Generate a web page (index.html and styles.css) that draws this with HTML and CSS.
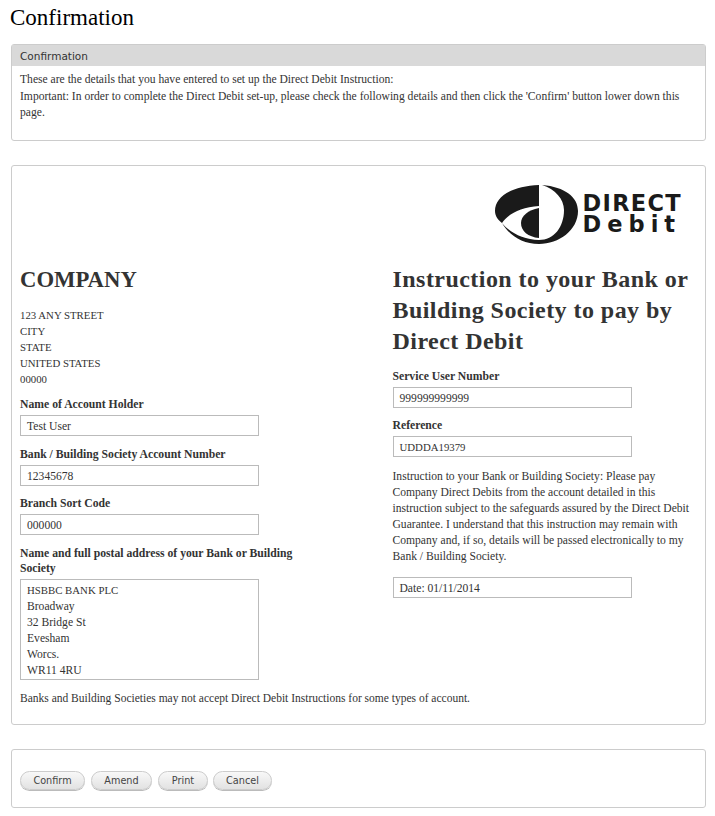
FILE: index.html
```html
<!DOCTYPE html>
<html lang="en">
<head>
    <meta charset="UTF-8">
    <meta name="viewport" content="width=device-width, initial-scale=1.0">
    <title>Confirmation</title>
    <link rel="stylesheet" href="styles.css">
</head>
<body>
    <h1 class="page-title">Confirmation</h1>

    <!-- Intro panel -->
    <section class="panel intro">
        <h2 class="panel-title">Confirmation</h2>
        <div class="panel-body">
            <p>These are the details that you have entered to set up the Direct Debit Instruction:<br>
            Important: In order to complete the Direct Debit set-up, please check the following details and then click the 'Confirm' button lower down this<br>page.</p>
        </div>
    </section>

    <!-- Direct Debit instruction -->
    <section class="panel instruction">
        <div class="logo-row">
            <svg class="logo" width="83" height="60" viewBox="0 0 83 60" aria-hidden="true">
                <path d="M44 0C18 1 0 11 0 26C0 31 3 35 7 38C12 30 25 22 44 21Z"/>
                <path d="M44 23C33 25 26 31 26 38C26 46 33 52 44 53Z"/>
                <path d="M47 0C70 2 83 12 83 26C83 45 64 59 44 59C27 59 14 50 7 38C14 47 28 55 44 55C59 55 69 42 69 25C69 14 60 4 47 0Z"/>
            </svg>
            <div class="logo-text">
                <div class="logo-direct">DIRECT</div>
                <div class="logo-debit">Debit</div>
            </div>
        </div>
        <div class="columns">
            <div class="col">
                <h2 class="company">COMPANY</h2>
                <p class="address">123 ANY STREET<br>CITY<br>STATE<br>UNITED STATES<br>00000</p>
                <div class="label">Name of Account Holder</div>
                <div class="field">Test User</div>
                <div class="label">Bank / Building Society Account Number</div>
                <div class="field">12345678</div>
                <div class="label">Branch Sort Code</div>
                <div class="field">000000</div>
                <div class="label two-line">Name and full postal address of your Bank or Building<br>Society</div>
                <div class="field bank-address"><span class="caps">HSBBC BANK PLC</span><br>Broadway<br>32 Bridge St<br>Evesham<br>Worcs.<br>WR11 4RU</div>
            </div>
            <div class="col col-right">
                <h2 class="heading">Instruction to your Bank or<br>Building Society to pay by<br>Direct Debit</h2>
                <div class="label">Service User Number</div>
                <div class="field">999999999999</div>
                <div class="label">Reference</div>
                <div class="field"><span class="caps">UDDDA19379</span></div>
                <p class="terms">Instruction to your Bank or Building Society: Please pay<br>Company Direct Debits from the account detailed in this<br>instruction subject to the safeguards assured by the Direct Debit<br>Guarantee. I understand that this instruction may remain with<br>Company and, if so, details will be passed electronically to my<br>Bank / Building Society.</p>
                <div class="field">Date: 01/11/2014</div>
            </div>
        </div>
        <p class="note">Banks and Building Societies may not accept Direct Debit Instructions for some types of account.</p>
    </section>

    <!-- Actions -->
    <section class="panel actions">
        <button class="btn confirm">Confirm</button>
        <button class="btn amend">Amend</button>
        <button class="btn print">Print</button>
        <button class="btn cancel">Cancel</button>
    </section>
</body>
</html>
```

FILE: styles.css
```css
/* General Styles */
body {
    margin: 0;
    padding: 0 9px 0 11px;
    background: #fff;
    color: #333;
    font-family: "Liberation Serif", serif;
    font-size: 11.6px;
    line-height: 16px;
}

p {
    margin: 0;
}

.page-title {
    height: 39px;
    margin: 0 0 0 -1px;
    padding-top: 5px;
    color: #000;
    font-size: 23px;
    font-weight: normal;
    line-height: 25px;
}

/* Panels */
.panel {
    border: 1px solid #ccc;
    border-radius: 3px;
    box-sizing: border-box;
}

.panel-title {
    margin: 0;
    height: 21px;
    padding-left: 8px;
    background: #d9d9d9;
    font-family: "DejaVu Sans", sans-serif;
    font-size: 10.5px;
    font-weight: normal;
    line-height: 22px;
}

.panel-body {
    padding: 6px 8px 0;
    line-height: 16.5px;
}

.intro {
    height: 97px;
    margin-bottom: 24px;
}

.instruction {
    height: 560px;
    margin-bottom: 24px;
    padding: 0 8px;
}

.actions {
    display: flex;
    gap: 6px;
    height: 59px;
    padding: 21px 8px 0;
}

/* Logo */
.logo-row {
    display: flex;
    justify-content: flex-end;
    gap: 5px;
    height: 88px;
    padding-top: 19px;
    box-sizing: border-box;
}

.logo {
    fill: #1a1a1a;
}

.logo-text {
    margin-right: 15px;
    padding-top: 8px;
    color: #1a1a1a;
    font-family: "DejaVu Sans", sans-serif;
    font-size: 22.5px;
    font-weight: bold;
    line-height: 20.5px;
}

.logo-direct {
    letter-spacing: 1.3px;
}

.logo-debit {
    letter-spacing: 6px;
}

/* Columns */
.columns {
    display: grid;
    grid-template-columns: 372.5px 1fr;
}

.company {
    margin: 12px 0 13px;
    font-size: 22.7px;
    font-weight: bold;
    line-height: 28px;
}

.heading {
    margin: 10px 0 12px;
    font-size: 24px;
    font-weight: bold;
    letter-spacing: 0.45px;
    line-height: 31px;
}

.address {
    margin-bottom: 10px;
    font-size: 10.8px;
}

.caps {
    font-size: 10.8px;
}

.label {
    margin-bottom: 2px;
    font-size: 11.7px;
    font-weight: bold;
}

.field {
    width: 239px;
    height: 21px;
    margin-bottom: 10.5px;
    padding-left: 6px;
    border: 1px solid #bbb;
    box-sizing: border-box;
    line-height: 21px;
}

.col-right .field {
    margin-bottom: 9.5px;
}

.two-line {
    margin-top: 10.5px;
    margin-bottom: 3.5px;
    line-height: 15px;
}

.bank-address {
    height: 101px;
    margin-bottom: 10px;
    padding-top: 2px;
    line-height: 16px;
}

.terms {
    margin: 12.5px 0 12px;
}

.note {
    font-size: 11.5px;
}

/* Buttons */
.btn {
    height: 19px;
    padding: 0;
    border: 1px solid #ccc;
    border-radius: 10px;
    background: linear-gradient(#f8f8f8, #e2e2e2);
    box-shadow: 0 1px 0 #bbb;
    color: #444;
    font-family: "DejaVu Sans", sans-serif;
    font-size: 9.7px;
    line-height: 17px;
}

.confirm { width: 65px; }
.amend { width: 61px; }
.print { width: 50px; }
.cancel { width: 59px; margin-left: -1px; }
```
